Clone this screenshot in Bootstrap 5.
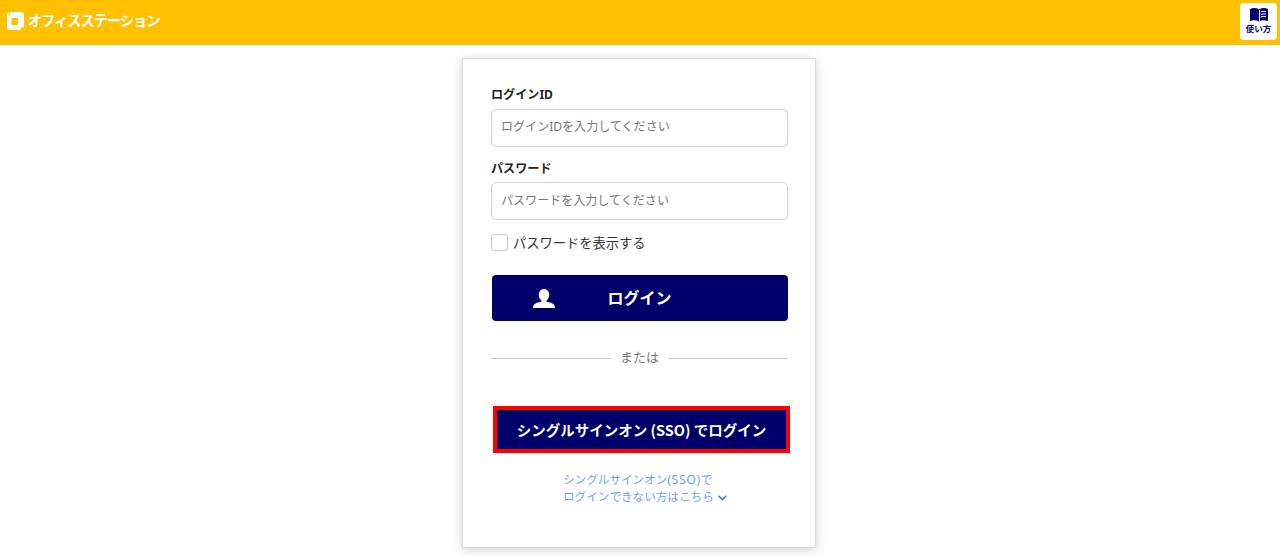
<!DOCTYPE html>
<html lang="ja">

<head>
    <meta charset="UTF-8">
    <meta name="viewport" content="width=device-width, initial-scale=1">
    <title>オフィスステーション ログイン</title>
    <link href="https://cdn.jsdelivr.net/npm/bootstrap@5.3.3/dist/css/bootstrap.min.css" rel="stylesheet">
    <style>
        body {
            font-family: "Noto Sans", "Noto Sans CJK JP", sans-serif;
            color: #222;
            min-height: 556px;
            overflow: hidden;
        }

        .site-header {
            height: 45px;
            background: #ffc000;
            padding: 0 3px 0 6px;
        }

        .brand-area {
            margin-top: -3px;
        }

        .brand-name {
            font-family: "Noto Sans CJK JP", sans-serif;
            font-size: 14.5px;
            font-weight: 700;
            letter-spacing: -1.25px;
            line-height: 20px;
            margin: -2px 0 0 3.5px;
        }

        .help-btn {
            width: 37px;
            height: 37px;
            margin-top: -2px;
            border-radius: 4px;
            color: #00006b;
            font-size: 8.5px;
            font-weight: 700;
            line-height: 13px;
            padding-top: 5px;
        }

        .login-box {
            width: 354px;
            height: 490px;
            margin: 13px 0 0 462px;
            padding: 27px 27px 0 28px;
            border: 1px solid #ddd;
            box-shadow: 0 2px 10px rgba(0, 0, 0, .18);
        }

        .field-label {
            font-size: 12.1px;
            font-weight: 700;
            line-height: 18px;
            margin-bottom: 5px;
        }

        .field-label.second {
            margin: 13px 0 4px;
        }

        .login-box .form-control {
            height: 38px;
            font-size: 12.05px;
            line-height: 18px;
            padding: 7px 9px 9px;
            border: 1px solid #d2d2d2;
            border-radius: 5px;
        }

        .login-box #loginId {
            padding: 6px 9px 10px;
        }

        .login-box .form-control::placeholder {
            color: #777;
        }

        .show-pass {
            margin-top: 13px;
        }

        .show-pass .form-check-input {
            width: 17px;
            height: 17px;
            margin: -1px 0 0;
            border: 1px solid #c8c8c8;
            border-radius: 3px;
        }

        .show-pass label {
            font-size: 13.25px;
            line-height: 20px;
            margin-left: 5px;
            color: #333;
        }

        .login-btn {
            height: 46px;
            width: 296px;
            background: #00006b;
            border-radius: 4px;
            font-size: 16px;
            font-weight: 700;
            line-height: 22px;
            margin: 22px 0 0 .5px;
        }

        .login-btn svg {
            left: 40px;
            top: 13px;
        }

        .or-line {
            margin-top: 26px;
            font-size: 13px;
            line-height: 20px;
            color: #777;
            gap: 9px;
        }

        .or-line span {
            height: 1px;
            margin-top: 2px;
            background: #c8c8c8;
        }

        .sso-btn {
            width: 297px;
            height: 47px;
            margin: 39px 0 0 2px;
            background: #00006b;
            border: 4px solid #f00;
            font-family: "Noto Sans CJK JP", sans-serif;
            font-size: 14.5px;
            font-weight: 700;
        }

        .sso-help {
            margin: 18px 0 0 72px;
            font-size: 11.6px;
            line-height: 17px;
            color: #6ba3f3;
        }

        .sso-help span {
            font-size: 12.5px;
            letter-spacing: .5px;
            line-height: 1;
        }
    </style>
</head>

<body class="bg-white">
    <header class="site-header d-flex justify-content-between align-items-center">
        <div class="brand-area d-flex align-items-center text-white">
            <svg width="18" height="18" viewBox="0 0 18 18">
                <path fill="#fff" fill-rule="evenodd" d="M3.500 0H15q3 0 3 3v12.500h-3V18H4q-3 0-3-3V3.500H3.500zM5.500 6v7H12V6z" />
                <path fill="#fff" d="M1 3q0-2 2-2v3H1z" />
                <path fill="none" stroke="#ffc000" stroke-width=".7" stroke-opacity=".7" d="M3.300 1v3.500M17.500 15.500H14" />
            </svg>
            <span class="brand-name">オフィスステーション</span>
        </div>
        <a href="#" class="help-btn bg-white d-flex flex-column align-items-center text-decoration-none">
            <svg width="18" height="14" viewBox="0 0 18 14">
                <path fill="#00006b" d="M0 1Q5-1 9 1.500Q13-1 18 1V13Q13 11.500 9 13.500Q5 11.500 0 13z" />
                <path fill="none" stroke="#fff" d="M9.500 2v11M11 4q2-1 5-.5M11 6.500q2-1 5-.5M11 9q2-1 5-.5" />
            </svg>
            <span>使い方</span>
        </a>
    </header>

    <main class="login-box bg-white">
        <form>
            <label for="loginId" class="field-label d-block">ログインID</label>
            <input type="text" id="loginId" class="form-control" placeholder="ログインIDを入力してください">

            <label for="password" class="field-label second d-block">パスワード</label>
            <input type="password" id="password" class="form-control" placeholder="パスワードを入力してください">

            <div class="show-pass d-flex align-items-center">
                <input type="checkbox" id="showPass" class="form-check-input">
                <label for="showPass">パスワードを表示する</label>
            </div>

            <button type="button" class="login-btn btn text-white position-relative p-0">
                <svg class="position-absolute" width="22" height="20" viewBox="0 0 22 20">
                    <path fill="#fff" d="M11 0C14.200 0 16.200 2.500 16.200 6C16.200 8.500 15 10.500 13.500 11.500V12.800C18 13.500 22 14.500 22 19H0C0 14.500 4 13.500 8.500 12.800V11.500C7 10.500 5.800 8.500 5.800 6C5.800 2.500 7.800 0 11 0z" />
                </svg>
                ログイン
            </button>
        </form>

        <div class="or-line d-flex align-items-center">
            <span class="flex-fill"></span>または<span class="flex-fill"></span>
        </div>

        <button type="button" class="sso-btn d-block text-white p-0">シングルサインオン (SSO) でログイン</button>

        <a href="#" class="sso-help d-block text-decoration-none">
            シングルサインオン<span>(SSO)</span>で<br>ログインできない方はこちら
            <svg width="10" height="6" viewBox="0 0 10 6">
                <path fill="none" stroke="#2f80ed" stroke-width="1.600" d="M1.500.8l3.800 3.800L9.100.8" />
            </svg>
        </a>
    </main>

    <script src="https://cdn.jsdelivr.net/npm/bootstrap@5.3.3/dist/js/bootstrap.bundle.min.js"></script>
</body>

</html>
